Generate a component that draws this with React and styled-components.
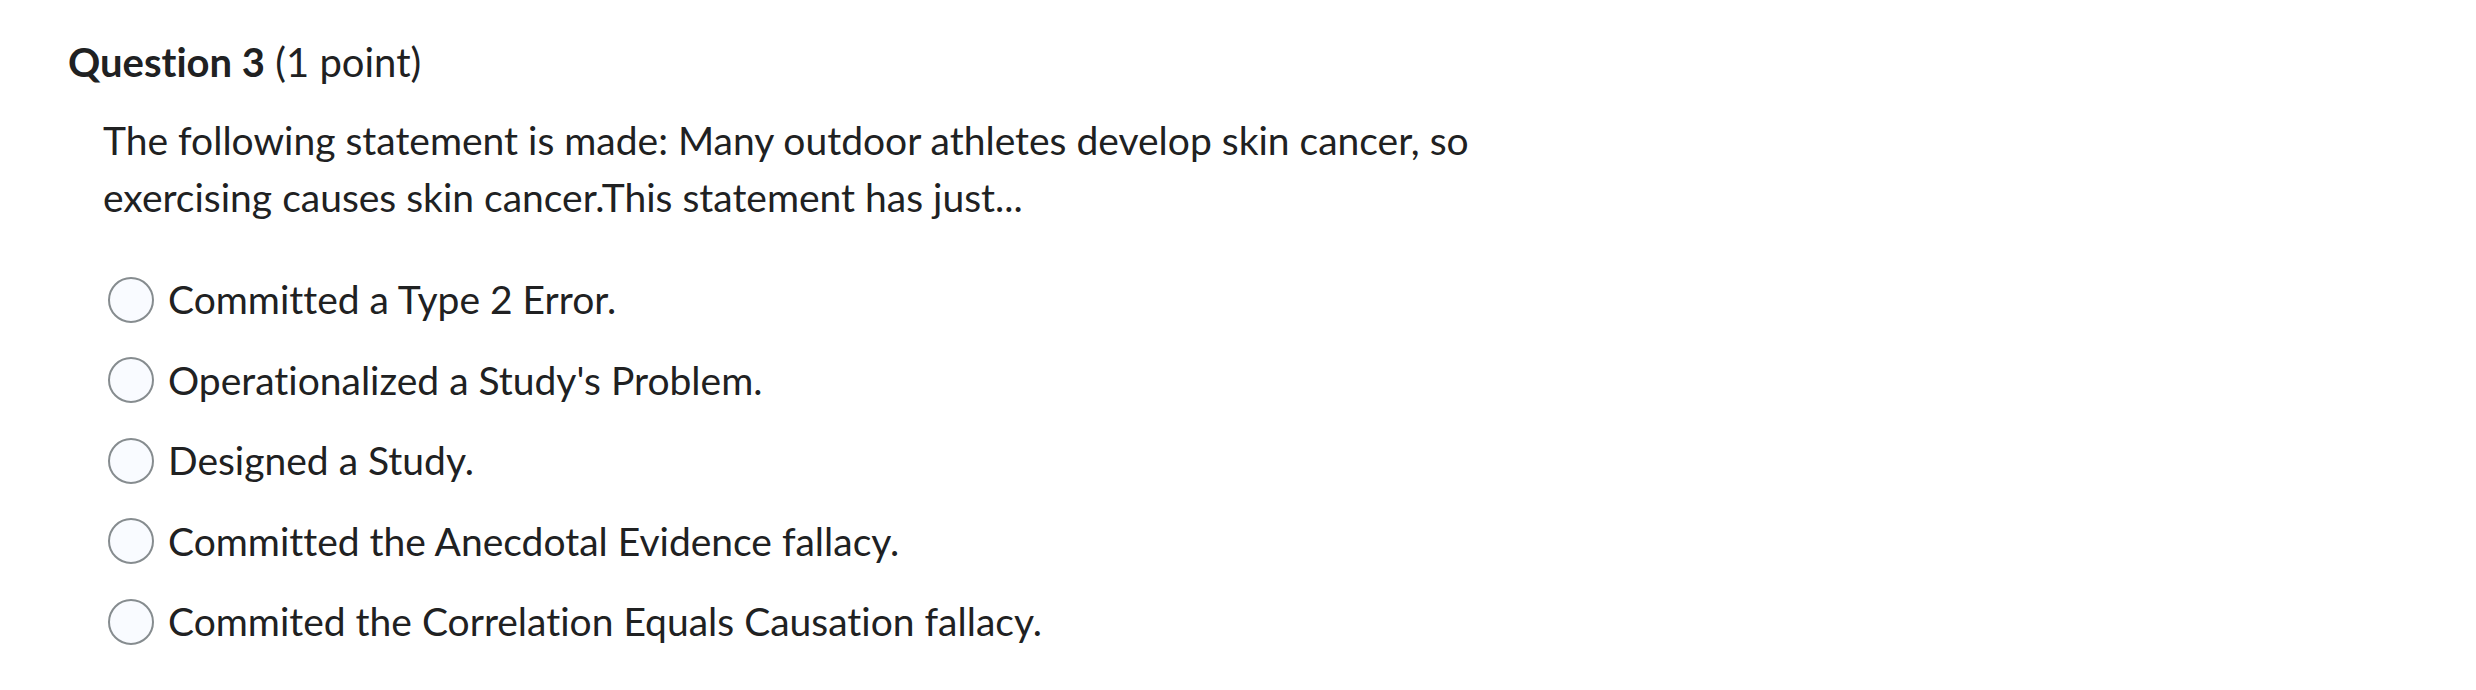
import React from 'react';
import styled, { createGlobalStyle } from 'styled-components';

const GlobalStyle = createGlobalStyle`
  html, body {
    margin: 0;
    padding: 0;
    background: #ffffff;
  }
  body {
    font-family: Lato, "Noto Sans", sans-serif;
    color: #202122;
    font-variant-ligatures: none;
  }
`;

const options = [
  'Committed a Type 2 Error.',
  "Operationalized a Study's Problem.",
  'Designed a Study.',
  'Committed the Anecdotal Evidence fallacy.',
  'Commited the Correlation Equals Causation fallacy.',
];

const App = () => {
  return (
    <>
      <GlobalStyle />
      <Page>
        <Title>
          <strong>Question 3</strong> (1 point)
        </Title>
        <Prompt>
          The following statement is made: Many outdoor athletes develop skin cancer, so
          <br />
          exercising causes skin cancer.This statement has just...
        </Prompt>
        <OptionList>
          {options.map((text) => (
            <Option key={text}>
              <Radio type="radio" name="q3" />
              <OptionText>{text}</OptionText>
            </Option>
          ))}
        </OptionList>
      </Page>
    </>
  );
};

const Page = styled.div`
  display: flex;
  flex-direction: column;
  padding: 36px 0 0 68px;
  width: 2476px;
  height: 690px;
  box-sizing: border-box;
`;

const Title = styled.h2`
  margin: 0;
  font-size: 40px;
  line-height: 52px;
  font-weight: 400;

  strong {
    font-weight: 700;
  }
`;

const Prompt = styled.p`
  margin: 24px 0 0 35px;
  font-size: 39px;
  line-height: 57px;
  font-weight: 400;
`;

const OptionList = styled.div`
  display: flex;
  flex-direction: column;
  gap: 23.5px;
  margin: 45px 0 0 40px;
`;

const Option = styled.label`
  display: flex;
  align-items: center;
  gap: 14px;
  height: 57px;
`;

const Radio = styled.input`
  appearance: none;
  margin: 0;
  width: 46px;
  height: 46px;
  border-radius: 50%;
  border: 2px solid #868c8f;
  background: #f9fbff;
  box-sizing: border-box;
  flex-shrink: 0;
`;

const OptionText = styled.span`
  font-size: 39px;
  line-height: 57px;
`;

export default App;
